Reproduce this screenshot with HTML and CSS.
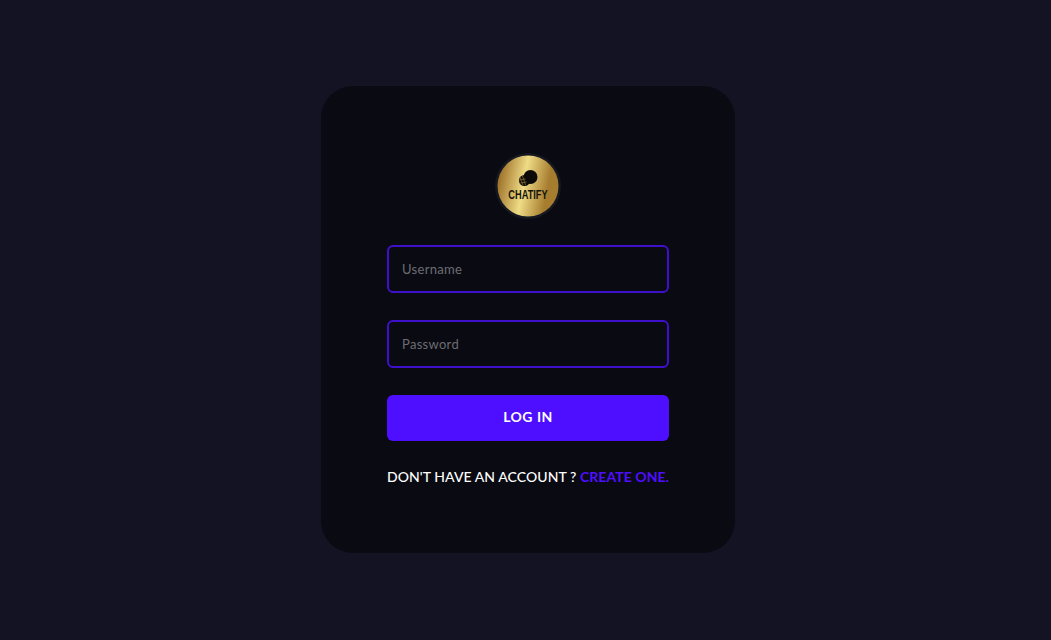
FILE: index.html
```html
<!DOCTYPE html>
<html lang="en">
<head>
  <meta charset="UTF-8">
  <title>Chatify - Log In</title>
  <meta name="viewport" content="width=device-width, initial-scale=1.0">
  <link rel="stylesheet" href="styles.css">
</head>
<body>
  <form class="card">
    <div class="brand">
      <svg class="logo" width="66" height="66" viewBox="0 0 66 66">
        <defs>
          <linearGradient id="gold" x1="0.1" y1="0" x2="0.9" y2="0.15">
            <stop offset="0" stop-color="#a0742c"/>
            <stop offset="0.5" stop-color="#efdc86"/>
            <stop offset="1" stop-color="#a67c2e"/>
          </linearGradient>
        </defs>
        <circle cx="33" cy="33" r="33" fill="#161820"/>
        <circle cx="33" cy="33" r="30.5" fill="url(#gold)"/>
        <circle cx="35.5" cy="24" r="7" fill="#0b0a08"/>
        <circle cx="29.5" cy="27.5" r="5.5" fill="#0b0a08"/>
        <path d="M25 24l3 8M27.5 23l3 9M24.5 27l6-1M25.5 30l6-1" stroke="#8d7336" stroke-width="0.7" fill="none"/>
        <text class="logo-text" x="13.3" y="46.3" textLength="39.4" lengthAdjust="spacingAndGlyphs">CHATIFY</text>
      </svg>
    </div>
    <input class="field" type="text" placeholder="Username">
    <input class="field" type="password" placeholder="Password">
    <button class="submit" type="button">LOG IN</button>
    <p class="note">DON'T HAVE AN ACCOUNT ? <a href="#">CREATE ONE.</a></p>
  </form>
</body>
</html>
```

FILE: styles.css
```css
* {
  box-sizing: border-box;
}
body {
  margin: 0;
  height: 100vh;
  padding: 0 0 1px 5px;
  background-color: #131324;
  font-family: Lato, "Open Sans", sans-serif;
  display: flex;
  justify-content: center;
  align-items: center;
}
.card {
  width: 414px;
  height: 467px;
  padding: 67px 66px 0;
  background-color: #0a0a12;
  border-radius: 32px;
  display: flex;
  flex-direction: column;
}
.brand {
  display: flex;
  justify-content: center;
  margin-bottom: 26px;
}
.logo {
  display: block;
}
.logo-text {
  font-family: "Liberation Sans", sans-serif;
  font-size: 12.5px;
  font-weight: bold;
  fill: #15120a;
}
.field {
  width: 282px;
  height: 48px;
  padding: 0 13px 1px;
  margin-bottom: 27px;
  background: transparent;
  border: 2px solid #3f10cc;
  border-radius: 6px;
  color: white;
  font-family: inherit;
  font-size: 13px;
  letter-spacing: 0.3px;
}
.field::placeholder {
  color: #6d6d72;
}
.submit {
  width: 282px;
  height: 46px;
  padding: 0 0 4px;
  background-color: #4e0eff;
  color: white;
  border: none;
  border-radius: 6px;
  font-family: inherit;
  font-size: 14px;
  font-weight: bold;
  letter-spacing: 0.5px;
  cursor: pointer;
}
.note {
  margin: 28px 0 0;
  color: white;
  font-size: 14px;
  font-weight: 500;
  line-height: 16px;
  letter-spacing: 0.06px;
  text-align: center;
  white-space: nowrap;
}
.note a {
  color: #4e0eff;
  font-weight: bold;
  text-decoration: none;
}
```
